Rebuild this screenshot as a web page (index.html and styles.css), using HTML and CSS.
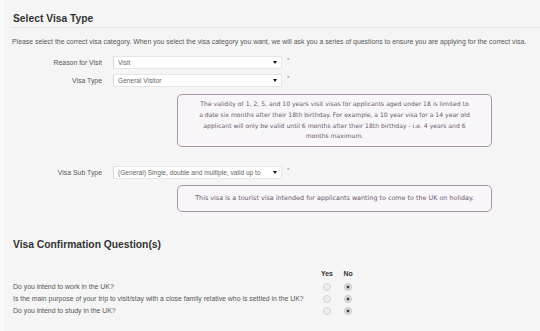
FILE: index.html
```html
<!DOCTYPE html>
<html lang="en">
<head>
    <meta charset="UTF-8">
    <meta name="viewport" content="width=device-width, initial-scale=1.0">
    <title>Select Visa Type</title>
    <link rel="stylesheet" href="styles.css">
</head>
<body>
    <div class="page">
        <h2 class="section-title">Select Visa Type</h2>

        <p class="intro">Please select the correct visa category. When you select the visa category you want, we will ask you a series of questions to ensure you are applying for the correct visa.</p>

        <div class="form-row">
            <label class="form-label">Reason for Visit</label>
            <div class="select"><span class="select-value">Visit</span></div>
            <span class="required">*</span>
        </div>

        <div class="form-row">
            <label class="form-label">Visa Type</label>
            <div class="select"><span class="select-value">General Visitor</span></div>
            <span class="required">*</span>
        </div>

        <div class="info-box info-long">
            The validity of 1, 2, 5, and 10 years visit visas for applicants aged under 18 is limited to<br>
            a date six months after their 18th birthday. For example, a 10 year visa for a 14 year old<br>
            applicant will only be valid until 6 months after their 18th birthday - i.e. 4 years and 6<br>
            months maximum.
        </div>

        <div class="form-row sub-type">
            <label class="form-label">Visa Sub Type</label>
            <div class="select"><span class="select-value">(General) Single, double and multiple, valid up to</span></div>
            <span class="required">*</span>
        </div>

        <div class="info-box">
            This visa is a tourist visa intended for applicants wanting to come to the UK on holiday.
        </div>

        <h2 class="section-title plain">Visa Confirmation Question(s)</h2>

        <div class="questions">
            <span></span>
            <span class="col-head">Yes</span>
            <span class="col-head">No</span>

            <span class="question">Do you intend to work in the UK?</span>
            <span class="radio"></span>
            <span class="radio checked"></span>

            <span class="question">Is the main purpose of your trip to visit/stay with a close family relative who is settled in the UK?</span>
            <span class="radio"></span>
            <span class="radio checked"></span>

            <span class="question">Do you intend to study in the UK?</span>
            <span class="radio"></span>
            <span class="radio checked"></span>
        </div>
    </div>
</body>
</html>
```

FILE: styles.css
```css
body {
    margin: 0;
    padding: 0;
    background-color: #f5f5f5;
    font-family: "Liberation Sans", Arial, sans-serif;
    color: #555;
    font-size: 6.9px;
}

.page {
    min-height: 331px;
    box-sizing: border-box;
    border-left: 4px solid #fbfbfb;
    padding: 13px 0 0 8px;
}

.section-title {
    margin: 0;
    font-size: 10.3px;
    line-height: 12px;
    color: #333;
    padding-left: 1px;
    padding-bottom: 2px;
    border-bottom: 1px solid #e4e4e4;
}

.section-title.plain {
    margin-top: 27px;
    border-bottom: none;
}

.intro {
    margin: 9px 0 9px 0;
    line-height: 10px;
    white-space: nowrap;
}

.form-row {
    display: grid;
    grid-template-columns: 90px 169px auto;
    column-gap: 11px;
    align-items: center;
    margin-bottom: 5px;
}

.form-row.sub-type {
    margin-top: 19px;
    margin-bottom: 6px;
}

.form-label {
    text-align: right;
}

.select {
    position: relative;
    height: 13px;
    box-sizing: border-box;
    background-color: #fff;
    border: 1px solid #e6e6e6;
    border-left-color: #d8d8d8;
    padding: 0 12px 0 4px;
    line-height: 11px;
    color: #666;
    font-size: 6.6px;
    overflow: hidden;
    white-space: nowrap;
}

.select::after {
    content: "";
    position: absolute;
    right: 4px;
    top: 4px;
    border-left: 2px solid transparent;
    border-right: 2px solid transparent;
    border-top: 3px solid #111;
}

.required {
    margin-left: -6px;
    align-self: start;
    font-size: 6px;
    line-height: 8px;
    color: #888;
}

.info-box {
    margin: 0 0 0 165px;
    width: 315px;
    box-sizing: border-box;
    border: 1px solid #a896a8;
    border-radius: 5px;
    background-color: #f8f6f8;
    padding: 7px 4px;
    font-family: "DejaVu Sans", Verdana, sans-serif;
    font-size: 6.4px;
    line-height: 10.8px;
    text-align: center;
    white-space: nowrap;
    color: #6e566e;
}

.info-box.info-long {
    margin-top: 7px;
    padding: 4px 4px;
    font-size: 6.1px;
}

.questions {
    display: grid;
    grid-template-columns: 302px 24px 18px;
    grid-auto-rows: 12px;
    align-items: center;
    margin-top: 16px;
    padding-left: 1px;
}

.col-head {
    text-align: center;
    font-weight: bold;
    color: #333;
    margin-bottom: 2px;
}

.question {
    white-space: nowrap;
}

.radio {
    justify-self: center;
    width: 6px;
    height: 6px;
    border-radius: 50%;
    border: 1px solid #d4d4d4;
    background-color: #ececec;
}

.radio.checked {
    border-color: #c4c4c4;
    background: radial-gradient(circle, #444 0, #444 1.2px, #e4e4e4 1.8px);
}
```
